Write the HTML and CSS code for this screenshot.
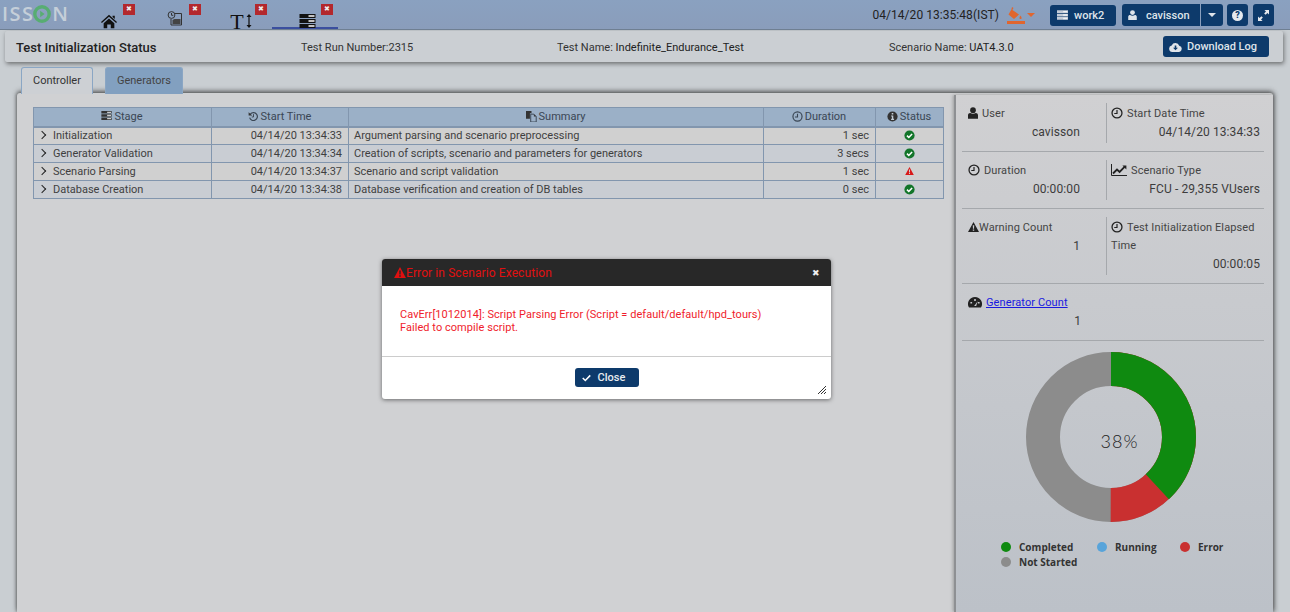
FILE: index.html
```html
<!DOCTYPE html>
<html lang="en">
<head>
  <meta charset="UTF-8" />
  <title>Test Initialization Status</title>
  <link rel="stylesheet" href="styles.css">
</head>
<body>

<svg class="sprite" width="0" height="0">
  <symbol id="i-server" viewBox="0 0 16 14"><path d="M0 0h16v4H0zM0 5h16v4H0zM0 10h16v4H0z"/><path fill="#fff" opacity=".75" d="M9 1h6v2H9zM9 6h6v2H9zM9 11h6v2H9z"/></symbol>
  <symbol id="i-clock" viewBox="0 0 14 14"><circle cx="7" cy="7" r="5.8" fill="none" stroke="currentColor" stroke-width="1.5"/><path d="M7 3.5V7.6H3.8" fill="none" stroke="currentColor" stroke-width="1.4"/></symbol>
  <symbol id="i-history" viewBox="0 0 14 14"><path d="M3 4a5 5 0 1 1-.9 4.4" fill="none" stroke="currentColor" stroke-width="1.5"/><path d="M.8 1.6 5.4 5.6H.8z"/><path d="M7 4v3.6H4.8" fill="none" stroke="currentColor" stroke-width="1.2"/></symbol>
  <symbol id="i-copy" viewBox="0 0 14 14"><path d="M0 0h7v3H5v7H0z"/><path d="M6 4h4l3 3v7H6z" fill="none" stroke="currentColor" stroke-width="1.2"/><path d="M10 4v3h3z"/></symbol>
  <symbol id="i-info" viewBox="0 0 14 14"><circle cx="7" cy="7" r="6.5"/><path fill="#c2ccd6" d="M6 2.4h2v2H6zM5.2 5.6H8v4.4h1v1.4H5.2V10h1V7h-1z"/></symbol>
  <symbol id="i-check" viewBox="0 0 14 14"><circle cx="7" cy="7" r="6.5" fill="#12752a"/><path d="M3.800 7.200 6.100 9.500 10.300 5" fill="none" stroke="#fff" stroke-width="2"/></symbol>
  <symbol id="i-warn" viewBox="0 0 14 13"><path fill-rule="evenodd" d="M7 0 14 13H0zM6.100 4.200l.2 4.600h1.400l.2-4.600zM6.100 9.800v1.600h1.800V9.800z"/></symbol>
  <symbol id="i-user" viewBox="0 0 12 14"><circle cx="6" cy="3.600" r="3.400"/><path d="M0 14V9.600C0 7.800 1.400 7 2.600 7 4.400 8.200 7.600 8.200 9.400 7 10.600 7 12 7.800 12 9.600V14z"/></symbol>
  <symbol id="i-chart" viewBox="0 0 16 12"><path d="M.5 0v11.500H16" fill="none" stroke="currentColor"/><path d="M2 9.500 6 5.500l2.600 2.400L14 2.400" fill="none" stroke="currentColor" stroke-width="1.800"/><path d="M11.400 1.400h4v4z"/></symbol>
  <symbol id="i-gauge" viewBox="0 0 14 11"><path fill-rule="evenodd" d="M7 0a7 7 0 0 1 6 10.600H1A7 7 0 0 1 7 0zM6.200 2v2h1.600V2zM2.400 5v1.600h1.700V5zM9.900 5v1.600h1.700V5zM6 9h2.200L9.600 4.200 7 8z"/></symbol>
</svg>

<header class="topbar">
  <div class="logo">
    <span>ISS</span>
    <svg class="logo-o" viewBox="0 0 18 18"><circle cx="9" cy="9" r="7.200" fill="none" stroke="#58ad72" stroke-width="3.400"/><path fill="#58ad72" d="M7.200 5.800 11.600 9l-4.400 3.200z"/></svg>
    <span>N</span>
  </div>
  <nav class="apptabs">
    <div class="apptab">
      <svg class="apptab-icon" viewBox="0 0 18 15"><path d="M9 0 18 8l-1 1.200L9 2.200 1 9.200 0 8zM3 9.400 9 4.200l6 5.200V15h-4v-4H7v4H3zM13 1h2.500v3.600L13 2.500z"/></svg>
      <span class="apptab-close">&#10006;</span>
    </div>
    <div class="apptab apptab-clipboard">
      <svg class="apptab-icon" viewBox="0 0 15 15"><path fill="none" stroke="#333" d="M6 2.500h8v11.500H3.500V8"/><path fill="#444" d="M7 8h6v5H5V9z"/><circle cx="4" cy="4" r="3.400" fill="#8a9fbd" stroke="#333"/><path fill="none" stroke="#333" d="M4 2v2.300h1.800"/></svg>
      <span class="apptab-close">&#10006;</span>
    </div>
    <div class="apptab">
      <span class="apptab-text">T</span>
      <svg class="apptab-arrow" viewBox="0 0 6 14"><path d="M3 0 5.500 3H3.600v8h1.900L3 14 .5 11h1.900V3H.5z"/></svg>
      <span class="apptab-close">&#10006;</span>
    </div>
    <div class="apptab apptab-active">
      <svg class="apptab-icon apptab-icon-wide"><use href="#i-server"/></svg>
      <span class="apptab-close">&#10006;</span>
    </div>
  </nav>
  <div class="topbar-right">
    <span class="clock">04/14/20 13:35:48(IST)</span>
    <svg class="paint" viewBox="0 0 18 17"><path fill="#e0662f" d="M5 0l1.500 1L5.400 3 12 7.500 7 12 1.500 7.500 4.400 2.500zM13.500 8.500c1.500 2 1.500 3.500 0 3.500s-1.500-1.500 0-3.500zM0 14h18v3H0z"/></svg>
    <span class="paint-caret"></span>
    <a class="btn btn-work"><svg class="btn-icon-server"><use href="#i-server"/></svg>work2</a>
    <a class="btn btn-user"><svg class="btn-icon-user"><use href="#i-user"/></svg>cavisson</a>
    <a class="btn btn-caret"><span class="caret"></span></a>
    <a class="btn btn-square"><span class="help">?</span></a>
    <a class="btn btn-square">
      <svg class="btn-icon-expand" viewBox="0 0 12 12"><path fill="#e6e9ee" d="M7 0h5v5l-1.700-1.700-2 2-1.600-1.600 2-2zM5 12H0V7l1.700 1.700 2-2 1.600 1.600-2 2z"/></svg>
    </a>
  </div>
</header>

<section class="subheader">
  <h1 class="subheader-title">Test Initialization Status</h1>
  <span class="meta meta-run">Test Run Number:2315</span>
  <span class="meta meta-name">Test Name: <b>Indefinite_Endurance_Test</b></span>
  <span class="meta meta-scenario">Scenario Name: <b>UAT4.3.0</b></span>
  <a class="btn btn-download">
    <svg class="btn-icon-cloud" viewBox="0 0 16 12"><path fill="#dfe4ea" fill-rule="evenodd" d="M4 12A4 4 0 0 1 3.300 4.100 5 5 0 0 1 12.600 4.500 3.800 3.800 0 0 1 12.500 12zM7 4v3H5l3 3 3-3H9V4z"/></svg>
    Download Log
  </a>
</section>

<div class="tabs">
  <a class="tab tab-active">Controller</a>
  <a class="tab">Generators</a>
</div>

<main class="panel">
  <div class="panel-left">
    <table class="stages">
      <colgroup>
        <col class="col-stage"><col class="col-start"><col class="col-summary"><col class="col-duration"><col class="col-status">
      </colgroup>
      <thead>
        <tr>
          <th><svg class="th-icon th-icon-server"><use href="#i-server"/></svg>Stage</th>
          <th><svg class="th-icon"><use href="#i-history"/></svg>Start Time</th>
          <th><svg class="th-icon"><use href="#i-copy"/></svg>Summary</th>
          <th><svg class="th-icon"><use href="#i-clock"/></svg>Duration</th>
          <th><svg class="th-icon"><use href="#i-info"/></svg>Status</th>
        </tr>
      </thead>
      <tbody>
        <tr>
          <td><span class="chevron"></span>Initialization</td>
          <td class="right">04/14/20 13:34:33</td>
          <td>Argument parsing and scenario preprocessing</td>
          <td class="right">1 sec</td>
          <td class="center"><svg class="status-icon"><use href="#i-check"/></svg></td>
        </tr>
        <tr>
          <td><span class="chevron"></span>Generator Validation</td>
          <td class="right">04/14/20 13:34:34</td>
          <td>Creation of scripts, scenario and parameters for generators</td>
          <td class="right">3 secs</td>
          <td class="center"><svg class="status-icon"><use href="#i-check"/></svg></td>
        </tr>
        <tr>
          <td><span class="chevron"></span>Scenario Parsing</td>
          <td class="right">04/14/20 13:34:37</td>
          <td>Scenario and script validation</td>
          <td class="right">1 sec</td>
          <td class="center"><svg class="status-icon status-warn"><use href="#i-warn"/></svg></td>
        </tr>
        <tr>
          <td><span class="chevron"></span>Database Creation</td>
          <td class="right">04/14/20 13:34:38</td>
          <td>Database verification and creation of DB tables</td>
          <td class="right">0 sec</td>
          <td class="center"><svg class="status-icon"><use href="#i-check"/></svg></td>
        </tr>
      </tbody>
    </table>
  </div>

  <aside class="side">
    <div class="side-row side-row-first">
      <div class="side-cell side-cell-left">
        <div class="side-label"><svg class="side-icon side-icon-user"><use href="#i-user"/></svg>User</div>
        <div class="side-value">cavisson</div>
      </div>
      <div class="side-cell">
        <div class="side-label"><svg class="side-icon"><use href="#i-clock"/></svg>Start Date Time</div>
        <div class="side-value">04/14/20 13:34:33</div>
      </div>
    </div>
    <div class="side-row">
      <div class="side-cell side-cell-left">
        <div class="side-label"><svg class="side-icon"><use href="#i-clock"/></svg>Duration</div>
        <div class="side-value">00:00:00</div>
      </div>
      <div class="side-cell">
        <div class="side-label"><svg class="side-icon side-icon-chart"><use href="#i-chart"/></svg>Scenario Type</div>
        <div class="side-value">FCU - 29,355 VUsers</div>
      </div>
    </div>
    <div class="side-row">
      <div class="side-cell side-cell-left">
        <div class="side-label"><svg class="side-icon side-icon-warn"><use href="#i-warn"/></svg>Warning Count</div>
        <div class="side-value">1</div>
      </div>
      <div class="side-cell">
        <div class="side-label"><svg class="side-icon"><use href="#i-clock"/></svg>Test Initialization Elapsed Time</div>
        <div class="side-value">00:00:05</div>
      </div>
    </div>
    <div class="side-row side-row-single">
      <div class="side-cell side-cell-left">
        <div class="side-label"><svg class="side-icon side-icon-gauge"><use href="#i-gauge"/></svg><a href="#" class="side-link">Generator Count</a></div>
        <div class="side-value">1</div>
      </div>
    </div>

    <div class="donut">
      <svg class="donut-svg" viewBox="0 0 170 170">
        <g fill="none" stroke-width="34" transform="rotate(-90 85 85)">
          <circle cx="85" cy="85" r="68" stroke="#8c8c8c"/>
          <circle cx="85" cy="85" r="68" stroke="#c93030" stroke-dasharray="213.6 427.3"/>
          <circle cx="85" cy="85" r="68" stroke="#0f8a10" stroke-dasharray="162.4 427.3"/>
        </g>
      </svg>
      <span class="donut-text">38%</span>
    </div>

    <div class="legend">
      <span class="legend-item"><i style="background:#0f8a10"></i>Completed</span>
      <span class="legend-item"><i style="background:#58a4da"></i>Running</span>
      <span class="legend-item"><i style="background:#c93030"></i>Error</span>
      <span class="legend-item legend-full"><i style="background:#8c8c8c"></i>Not Started</span>
    </div>
  </aside>
</main>

<div class="modal">
  <div class="modal-head">
    <svg class="modal-warn"><use href="#i-warn"/></svg>
    <span class="modal-title">Error in Scenario Execution</span>
    <span class="modal-x">&#10006;</span>
  </div>
  <div class="modal-body">
    CavErr[1012014]: Script Parsing Error (Script = default/default/hpd_tours)<br>
    Failed to compile script.
  </div>
  <div class="modal-foot">
    <a class="btn btn-close"><svg class="btn-icon-check" viewBox="0 0 12 10"><path d="M1 5l3.400 3.400L11 1.500" fill="none" stroke="#fff" stroke-width="2"/></svg>Close</a>
  </div>
  <svg class="modal-resize" viewBox="0 0 8 8"><path d="M0 8 8 0M3 8l5-5M6 8l2-2" stroke="#333" fill="none"/></svg>
</div>

</body>
</html>
```

FILE: styles.css
```css
* {
  box-sizing: border-box;
}

html, body {
  height: 100%;
}

body {
  margin: 0;
  height: 612px;
  overflow: hidden;
  font-family: 'Roboto', sans-serif;
  font-size: 11px;
  color: #333;
  background: #c9ced2;
  display: flex;
  flex-direction: column;
}

.sprite {
  position: absolute;
}

a {
  text-decoration: none;
}

/* top bar */
.topbar {
  height: 30px;
  flex: none;
  background: linear-gradient(180deg, #8aa1c0, #8a9dbb);
  border-bottom: 1px solid #6f7f92;
  display: flex;
  align-items: flex-start;
  position: relative;
}

.logo {
  width: 74px;
  display: flex;
  align-items: center;
  padding: 3px 0 0 2px;
  font-family: 'Open Sans', sans-serif;
  font-size: 20px;
  font-weight: 600;
  letter-spacing: 1.400px;
  color: #c5cfd9;
  line-height: 22px;
}

.logo-o {
  width: 18px;
  height: 18px;
  margin: 0 1px 0 -1px;
  flex: none;
}

.apptabs {
  display: flex;
}

.apptab {
  width: 66px;
  height: 29px;
  position: relative;
  display: flex;
  justify-content: center;
  padding-top: 14px;
  padding-left: 4px;
  fill: #111;
}

.apptab-clipboard {
  padding-top: 11px;
}

.apptab-icon {
  width: 16px;
  height: 15px;
}

.apptab-text {
  font-family: 'Liberation Serif', serif;
  font-size: 22px;
  line-height: 15px;
  color: #111;
}

.apptab-arrow {
  width: 6px;
  height: 14px;
  margin-left: 2px;
}

.apptab-icon-wide {
  width: 19px;
  height: 14px;
}

.apptab-active {
  border-bottom: 2px solid #3b4f9f;
}

.apptab-close {
  position: absolute;
  top: 4px;
  right: 5px;
  width: 12px;
  height: 11px;
  background: #b3282d;
  color: #eee;
  font-size: 7px;
  line-height: 11px;
  text-align: center;
}

.topbar-right {
  position: absolute;
  top: 4px;
  right: 16px;
  display: flex;
  align-items: center;
  height: 22px;
}

.clock {
  font-size: 12px;
  color: #222;
  margin-right: 8px;
  letter-spacing: 0.050px;
}

.paint {
  width: 18px;
  height: 17px;
  margin-right: 2px;
}

.paint-caret {
  width: 0;
  height: 0;
  border-left: 4px solid transparent;
  border-right: 4px solid transparent;
  border-top: 4px solid #e0662f;
  margin-right: 15px;
}

.btn {
  background: #0d3a6b;
  color: #dfe4ea;
  border-radius: 3px;
  display: inline-flex;
  align-items: center;
  font-weight: 500;
}

.btn-work {
  width: 66px;
  height: 21px;
  padding-left: 7px;
  margin-right: 6px;
  font-size: 11px;
}

.btn-icon-server {
  width: 11px;
  height: 10px;
  fill: #c5cdd8;
  margin-right: 6px;
}

.btn-user {
  width: 78px;
  height: 22px;
  padding-left: 6px;
  margin-right: 1px;
  font-size: 11px;
  border-radius: 3px 0 0 3px;
}

.btn-icon-user {
  width: 9px;
  height: 10px;
  fill: #dfe4ea;
  margin-right: 9px;
}

.btn-caret {
  width: 22px;
  height: 22px;
  justify-content: center;
  margin-right: 3px;
  border-radius: 0 3px 3px 0;
}

.caret {
  width: 0;
  height: 0;
  border-left: 4px solid transparent;
  border-right: 4px solid transparent;
  border-top: 4px solid #dfe4ea;
}

.btn-square {
  width: 21px;
  height: 22px;
  justify-content: center;
  margin-left: 1px;
  margin-right: 4px;
}

.btn-square:last-child {
  margin-right: 0;
}

.help {
  width: 11px;
  height: 11px;
  border-radius: 50%;
  background: #e6e9ee;
  color: #0d3a6b;
  font-size: 9px;
  font-weight: 900;
  line-height: 11px;
  text-align: center;
}

.btn-icon-expand {
  width: 11px;
  height: 11px;
}

/* sub header */
.subheader {
  flex: none;
  height: 31px;
  margin: 1px 7px 0 5px;
  background: #cbcfd3;
  box-shadow: 1px 2px 4px rgba(40, 40, 40, 0.55);
  border-radius: 2px;
  display: grid;
  grid-template-columns: 285px 256px 332px 274px 106px;
  padding-left: 11px;
  align-items: center;
}

.subheader-title {
  margin: 2px 0 0;
  font-size: 13px;
  font-weight: 500;
  color: #222;
  white-space: nowrap;
}

.meta {
  font-size: 11px;
  color: #333;
  white-space: nowrap;
  margin-top: 1px;
}

.meta b {
  font-weight: 400;
  color: #222;
}

.btn-download {
  height: 21px;
  font-size: 11px;
  color: #dfe4ea;
  padding-left: 6px;
}

.btn-icon-cloud {
  width: 13px;
  height: 10px;
  margin-right: 5px;
}

/* tabs */
.tabs {
  flex: none;
  display: flex;
  gap: 12px;
  padding: 5px 0 0 21px;
  height: 32px;
  margin-bottom: -1px;
  position: relative;
}

.tab {
  height: 27px;
  padding: 6px 11px 0;
  font-size: 11px;
  color: #444;
  background: #82a0c0;
  border: 1px solid #8aa6c4;
  border-bottom: none;
  border-radius: 3px 3px 0 0;
}

.tab-active {
  background: #cdd0d4;
  border-color: #8aa6c4;
  color: #333;
  z-index: 1;
}

/* main panel */
.panel {
  flex: 1;
  margin: 0 17px;
  min-height: 0;
  background: #d0d1d3;
  box-shadow: 0 -2px 5px rgba(50, 50, 50, 0.6), 2px 0 4px rgba(50, 50, 50, 0.4), -1px 0 3px rgba(50, 50, 50, 0.3);
  border-radius: 3px 3px 0 0;
  display: flex;
}

.panel-left {
  width: 937px;
  flex: none;
  padding: 14px 0 0 16px;
}

.stages {
  width: 910px;
  border-collapse: collapse;
  table-layout: fixed;
  font-size: 11px;
  color: #3f3f3f;
}

.col-stage { width: 178px; }
.col-start { width: 137px; }
.col-summary { width: 415px; }
.col-duration { width: 112px; }
.col-status { width: 68px; }

.stages th,
.stages td {
  border: 1px solid #8296ae;
  height: 18px;
  padding: 0 6px 0 5px;
  white-space: nowrap;
}

.stages th {
  height: 19px;
  background: #9bb0c7;
  font-weight: 400;
  fill: #333;
  color: #3a4654;
  border-bottom-width: 2px;
}

.stages tbody tr:nth-child(odd) td {
  background: #d0d0d0;
}

.stages tbody tr:nth-child(even) td {
  background: #c9cdd3;
}

.th-icon {
  width: 11px;
  height: 11px;
  margin-right: 2px;
  vertical-align: -2px;
}

.th-icon-server {
  width: 11px;
  height: 9px;
  vertical-align: 0;
}

.right {
  text-align: right;
}

.center {
  text-align: center;
}

.chevron {
  display: inline-block;
  width: 6px;
  height: 6px;
  border-top: 1.500px solid #222;
  border-right: 1.500px solid #222;
  transform: rotate(45deg);
  margin: 0 8px 1px 0;
}

.status-icon {
  width: 11px;
  height: 11px;
  vertical-align: -2px;
}

.status-warn {
  fill: #d81818;
  width: 9px;
  height: 8px;
  vertical-align: 0;
}

/* right column */
.side {
  flex: 1;
  border-left: 2px solid #8e9093;
  margin-top: 2px;
  padding: 0 9px 0 6px;
  background: linear-gradient(180deg, #d0d0d2, #bcc1c8);
  box-shadow: -1px 0 3px rgba(60, 60, 60, 0.35);
  color: #444;
}

.side-row {
  display: flex;
  border-bottom: 1px solid #a5a8ac;
  padding: 8px 0;
  height: 57px;
}

.side-row:nth-child(3) {
  height: 75px;
}

.side-cell {
  flex: 1;
  padding: 2px 4px 0;
}

.side-cell-left {
  flex: none;
  width: 145px;
  padding: 2px 26px 0 6px;
  min-height: 40px;
  border-right: 1px solid #a5a8ac;
}

.side-row-single .side-cell-left {
  border-right: none;
}

.side-label {
  font-size: 11px;
  line-height: 18px;
  color: #444;
  letter-spacing: 0.100px;
}

.side-value {
  font-size: 12px;
  line-height: 19px;
  text-align: right;
  color: #3c3c3c;
  letter-spacing: 0.100px;
  white-space: nowrap;
}

.side-icon {
  width: 12px;
  height: 12px;
  margin-right: 4px;
  fill: #222;
  color: #222;
  vertical-align: -2px;
}

.side-icon-user {
  width: 10px;
  height: 12px;
}

.side-icon-chart {
  width: 16px;
  height: 12px;
}

.side-icon-warn {
  width: 11px;
  margin-right: 0;
}

.side-icon-gauge {
  width: 14px;
  height: 11px;
}

.side-link {
  color: #1a1ae0;
  text-decoration: underline;
}

.donut {
  width: 170px;
  height: 170px;
  margin: 11px 0 0 64px;
  position: relative;
}

.donut-svg {
  width: 170px;
  height: 170px;
  display: block;
}

.donut-text {
  position: absolute;
  left: 0;
  right: 0;
  top: 78px;
  text-align: center;
  padding-left: 17px;
  font-family: 'Lato', sans-serif;
  font-weight: 300;
  font-size: 18px;
  letter-spacing: 1px;
  color: #222;
}

.legend {
  display: grid;
  grid-template-columns: 96px 83px 1fr;
  row-gap: 1px;
  margin: 18px 0 0 39px;
  font-family: 'Open Sans', sans-serif;
  font-size: 10px;
  font-weight: 700;
  line-height: 14px;
  color: #333;
}

.legend-item {
  display: flex;
  align-items: center;
  white-space: nowrap;
}

.legend-item i {
  width: 10px;
  height: 10px;
  border-radius: 50%;
  margin-right: 8px;
}

.legend-full {
  grid-column: 1 / 4;
}

/* dialog */
.modal {
  position: absolute;
  left: 382px;
  top: 259px;
  width: 449px;
  height: 140px;
  background: #fff;
  border-radius: 3px;
  box-shadow: 0 1px 4px rgba(0, 0, 0, 0.5);
}

.modal-head {
  height: 27px;
  background: #282828;
  border-radius: 3px 3px 0 0;
  display: flex;
  align-items: center;
  padding: 0 11px 0 12px;
}

.modal-warn {
  width: 12px;
  height: 11px;
  fill: #e01010;
}

.modal-title {
  flex: 1;
  color: #e01010;
  font-size: 12px;
  letter-spacing: 0.100px;
}

.modal-x {
  color: #eee;
  font-size: 9px;
}

.modal-body {
  height: 71px;
  padding: 22px 18px 0;
  border-bottom: 1px solid #ccc;
  color: #f01c2c;
  font-size: 11px;
  line-height: 13px;
  letter-spacing: 0.050px;
}

.modal-foot {
  display: flex;
  justify-content: center;
  padding-top: 11px;
}

.btn-close {
  width: 64px;
  height: 19px;
  padding-left: 7px;
  font-size: 11px;
  color: #e8ecf0;
}

.btn-icon-check {
  width: 9px;
  height: 8px;
  margin-right: 7px;
}

.modal-resize {
  position: absolute;
  right: 5px;
  bottom: 5px;
  width: 8px;
  height: 8px;
}
```
